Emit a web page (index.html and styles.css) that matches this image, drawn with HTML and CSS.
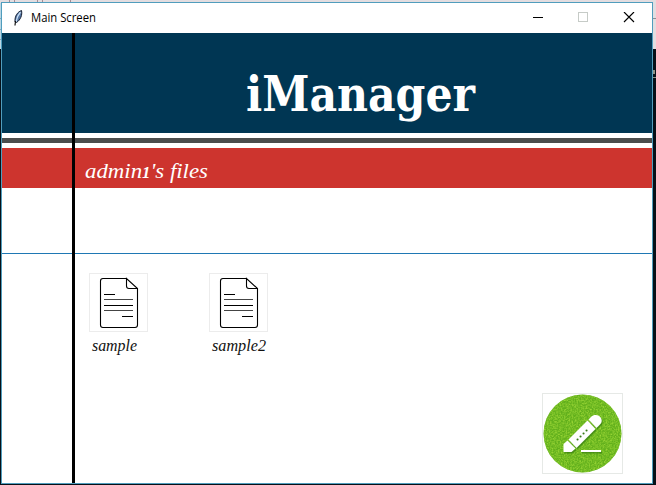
FILE: index.html
```html
<!DOCTYPE html>
<html lang="en">
<head>
<meta charset="utf-8">
<title>Main Screen</title>
<link rel="stylesheet" href="styles.css">
</head>
<body>
<svg class="backdrop" width="656" height="485" aria-hidden="true">
  <path fill="#e3dde0" d="M0 0H656V49H0z"/>
  <path fill="#b9d7e5" d="M0 3H2V49H0z"/>
  <path fill="#8b8e94" d="M652 18h4v1h-4z"/>
  <path fill="#a58c94" d="M9 0h1v2H9zM14 0h1v2h-1zM37 0h1v2h-1zM42 0h1v2h-1zM70 0h1v2h-1z"/>
  <path fill="#7ca9be" d="M0 18h2v1H0zM0 29h2v1H0zM0 39h2v1H0z"/>
  <path fill="#8c9287" d="M653 70h2v4h-2zM653 77h3v1h-3z"/>
</svg>
<main class="window">
  <header class="titlebar">
    <svg class="feather" width="12" height="18" viewBox="0 0 12 18">
      <path d="M9.5 1.500C5.500 3 2.500 7 3 13L4.500 13.500C8.500 11 10.500 6 9.500 1.500z" fill="#5577a6" stroke="#172033"/>
      <path d="M8.500 3C6 6 4.500 9 4 13" fill="none" stroke="#c9def4" stroke-width="1.300"/>
      <path d="M3.500 12L3 16.500" stroke="#111" stroke-width="1.200"/>
    </svg>
    <svg class="caption" width="70" height="20"><text x="1" y="14" textLength="65" lengthAdjust="spacingAndGlyphs">Main Screen</text></svg>
    <svg class="controls" width="106" height="12" fill="none" shape-rendering="crispEdges">
      <path d="M1 5.500h10" stroke="#000"/>
      <rect x="46.500" y="0.500" width="9" height="9" stroke="#c6cbc7"/>
      <path d="M92 0l10 10M102 0L92 10" stroke="#000" stroke-width="1.150" shape-rendering="auto"/>
    </svg>
  </header>
  <div class="content">
    <div class="banner"><svg width="240" height="70"><text x="4" y="58" textLength="229" lengthAdjust="spacingAndGlyphs">iManager</text></svg></div>
    <div class="stripe"></div>
    <div class="owner"><svg width="130" height="36"><text x="1" y="28" textLength="123" lengthAdjust="spacingAndGlyphs">admin<tspan class="oldstyle">1</tspan>'s files</text></svg></div>
    <div class="toolbar"></div>
    <div class="files">
      <div class="file">
        <div class="thumb"><svg width="57" height="57"><use href="#document"/></svg></div>
        <svg class="label" width="64" height="26"><text x="3" y="19" textLength="45" lengthAdjust="spacingAndGlyphs">sample</text></svg>
      </div>
      <div class="file">
        <div class="thumb"><svg width="57" height="57"><use href="#document"/></svg></div>
        <svg class="label" width="64" height="26"><text x="3" y="19" textLength="54" lengthAdjust="spacingAndGlyphs">sample2</text></svg>
      </div>
    </div>
    <div class="edit">
      <svg width="79" height="79">
        <defs>
          <filter id="grain" x="0" y="0" width="1" height="1" color-interpolation-filters="sRGB">
            <feTurbulence type="fractalNoise" baseFrequency=".65" numOctaves="2" seed="4"/>
            <feColorMatrix values="0 0 0 0 .62  0 0 0 0 .85  0 0 0 0 .22  1.8 0 0 0 -.6"/>
            <feComposite in2="SourceGraphic" operator="in" result="n"/>
            <feMerge><feMergeNode in="SourceGraphic"/><feMergeNode in="n"/></feMerge>
          </filter>
          <g id="document" fill="none" stroke="#000" stroke-width="1.100">
            <path d="M36 4.500H13Q10.500 4.500 10.500 7V51Q10.500 53.500 13 53.500H45Q47.500 53.500 47.500 51V14.500L36.500 4.500V12Q36.500 14.500 39 14.500H47"/>
            <path d="M14 20.500H25M14 31.500H43M32 42.500H43"/>
            <path d="M14 25.500H43M14 36.500H43" stroke="#444"/>
          </g>
        </defs>
        <circle cx="39.500" cy="39.500" r="39" fill="#62b01c" filter="url(#grain)"/>
        <g transform="translate(1 1.500)" fill="#347a10" opacity=".65"><use href="#pencil"/></g>
        <g fill="#fff"><g id="pencil">
          <path d="M20.500 58V50L24.500 46.500L32.500 54.500L28.500 58z"/>
          <path d="M25.500 45.500L44.500 26.500L52.500 35L33.500 54z"/>
          <path d="M45.500 25.500L48 23C51 20 56 20.500 58 24C59.500 27 58.500 29 56.500 31L53.500 34z"/>
          <path d="M38 56H58V58H38z"/>
        </g></g>
        <path d="M34.500 45.500h.1M37.500 42.500h.1M40.500 39.500h.1M43.500 36.500h.1" stroke="#397b18" stroke-width="2" stroke-linecap="round"/>
      </svg>
    </div>
  </div>
</main>
</body>
</html>
```
FILE: styles.css
```css
* { box-sizing: border-box; }
body {
  margin: 0;
  width: 656px;
  height: 485px;
  overflow: hidden;
  padding: 2px 0 0 1px;
  background: #061018;
}
svg { display: block; flex: none; }
.backdrop { position: absolute; left: 0; top: 0; z-index: -1; }
.window {
  width: 652px;
  height: 482px;
  border: 1px solid #509dbd;
  background: #fff;
}
.titlebar {
  height: 30px;
  display: flex;
  align-items: center;
  padding: 0 14px 0 10px;
}
.caption { margin-left: 6px; font: 12px "Open Sans", sans-serif; }
.caption text { fill: #000; }
.controls { margin-left: auto; }
.content { position: relative; height: 450px; }
.content::before {
  content: "";
  position: absolute;
  left: 70px;
  top: 0;
  width: 3px;
  height: 450px;
  background: #000;
}
.banner {
  height: 100px;
  background: #003653;
  padding: 20px 0 0 240px;
  font: bold 48px "DejaVu Serif Condensed", "DejaVu Serif", serif;
}
.banner text, .owner text { fill: #fff; }
.stripe {
  height: 15px;
  border: solid #fff;
  border-width: 5px 0;
  background: #4b4d4d;
}
.owner {
  height: 40px;
  padding: 2px 0 0 82px;
  background: #cd342e;
  font: italic 22px "Liberation Serif", serif;
}
.oldstyle { font-size: 16px; font-weight: bold; }
.toolbar { height: 66px; border-bottom: 1px solid #1f78b4; }
.files { display: flex; gap: 61px; padding: 19px 0 0 87px; }
.file { width: 59px; }
.thumb {
  width: 59px;
  height: 59px;
  border: 1px solid #ececec;
}
.label { font: italic 17px "Liberation Serif", serif; }
.label text { fill: #111; }
.edit {
  width: 81px;
  height: 81px;
  margin: 35px 29px 0 auto;
  border: 1px solid #e6e9e6;
}
```
